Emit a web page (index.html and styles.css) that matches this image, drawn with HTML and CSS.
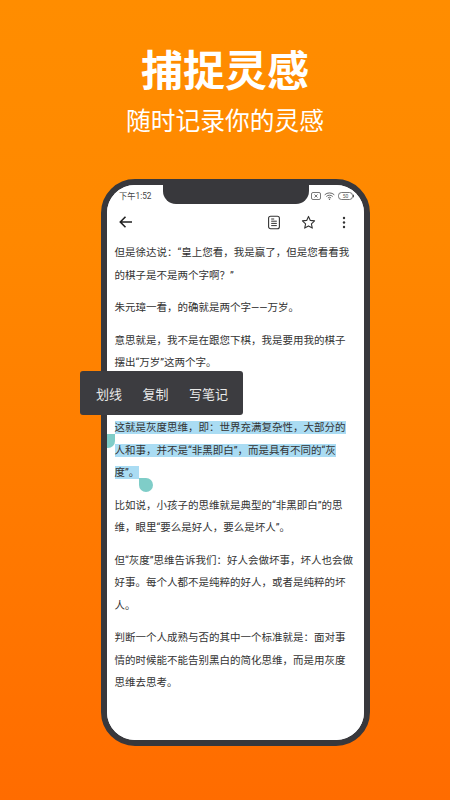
FILE: index.html
```html
<!DOCTYPE html>
<html lang="zh-CN">
<head>
<meta charset="utf-8">
<title>捕捉灵感</title>
<link rel="stylesheet" href="styles.css">
</head>
<body>
<main class="page">
  <h1 class="title">捕捉灵感</h1>
  <p class="subtitle">随时记录你的灵感</p>
  <section class="phone">
    <div class="screen">
      <div class="status">
        <span class="time">下午1:52</span>
        <span class="notch"></span>
        <span class="status-icons">
          <svg width="10" height="8" viewBox="0 0 10 8"><rect x="0.5" y="0.5" width="9" height="7" rx="1.5" fill="none" stroke="#555" stroke-width="0.8"/><path d="M3.5 2.5l3 3M6.5 2.5l-3 3" stroke="#555" stroke-width="0.8"/></svg>
          <svg width="11" height="8" viewBox="0 0 11 8"><path d="M0.7 2.8a7 7 0 0 1 9.6 0M2.3 4.5a4.6 4.6 0 0 1 6.4 0M3.9 6a2.3 2.3 0 0 1 3.2 0" fill="none" stroke="#555" stroke-width="0.9"/><circle cx="5.5" cy="7.2" r="0.7" fill="#555"/></svg>
          <svg width="16" height="8" viewBox="0 0 16 8"><rect x="0.5" y="0.5" width="14" height="7" rx="3" fill="none" stroke="#555" stroke-width="0.8"/><rect x="15" y="2.7" width="1" height="2.6" fill="#555"/><text x="7.5" y="6" font-size="5" text-anchor="middle" fill="#555">50</text></svg>
        </span>
      </div>
      <div class="toolbar">
        <svg class="back" width="16" height="16" viewBox="0 0 16 16"><path d="M14 8H2.5M7.5 2.8L2.3 8l5.2 5.2" fill="none" stroke="#222" stroke-width="1.6"/></svg>
        <span class="tools">
          <svg width="14" height="15" viewBox="0 0 14 15"><rect x="1.6" y="1.2" width="10.8" height="12.6" rx="2" fill="none" stroke="#333" stroke-width="1.1"/><path d="M4.2 4h3M4.2 6.2h5.6M4.2 8.4h5.6M4.2 10.6h5.6" stroke="#333" stroke-width="1"/></svg>
          <svg width="15" height="15" viewBox="0 0 15 15"><path d="M7.5 1.4l1.8 4 4.3.5-3.2 2.9.9 4.3-3.8-2.2-3.8 2.2.9-4.3L1.4 5.9l4.3-.5z" fill="none" stroke="#333" stroke-width="1.1" stroke-linejoin="round"/></svg>
          <svg width="4" height="13" viewBox="0 0 4 13"><circle cx="2" cy="2" r="1.2" fill="#333"/><circle cx="2" cy="6.5" r="1.2" fill="#333"/><circle cx="2" cy="11" r="1.2" fill="#333"/></svg>
        </span>
      </div>
      <article class="reader">
        <p>但是徐达说：“皇上您看，我是赢了，但是您看看我的棋子是不是两个字啊？”</p>
        <p>朱元璋一看，的确就是两个字——万岁。</p>
        <p>意思就是，我不是在跟您下棋，我是要用我的棋子摆出“万岁”这两个字。</p>
        <p class="hidden-line">&nbsp;</p>
        <p><span class="selected">这就是灰度思维，即：世界充满复杂性，大部分的人和事，并不是“非黑即白”，而是具有不同的“灰度”。</span></p>
        <p>比如说，小孩子的思维就是典型的“非黑即白”的思维，眼里“要么是好人，要么是坏人”。</p>
        <p>但“灰度”思维告诉我们：好人会做坏事，坏人也会做好事。每个人都不是纯粹的好人，或者是纯粹的坏人。</p>
        <p>判断一个人成熟与否的其中一个标准就是：面对事情的时候能不能告别黑白的简化思维，而是用灰度思维去思考。</p>
      </article>
      <span class="handle handle-start"></span>
      <span class="handle handle-end"></span>
    </div>
    <div class="menu">
      <span>划线</span><span>复制</span><span>写笔记</span>
    </div>
  </section>
</main>
</body>
</html>
```

FILE: styles.css
```css
* { box-sizing: border-box; }
html, body { margin: 0; height: 100%; }
body {
  font-family: "Roboto", "Noto Sans CJK SC", sans-serif;
  overflow: hidden;
}
.page {
  width: 450px;
  height: 800px;
  background: linear-gradient(180deg, #ff8d00 0%, #ff8800 30%, #ff6c00 100%);
  display: flex;
  flex-direction: column;
  align-items: center;
  padding-top: 44px;
}
.title {
  margin: 0;
  font-size: 42px;
  line-height: 56px;
  font-weight: 700;
  color: #fff;
}
.subtitle {
  margin: 8px 0 0;
  font-size: 24.75px;
  line-height: 28px;
  font-weight: 400;
  color: #fff;
}
.phone {
  position: relative;
  width: 269px;
  height: 567px;
  margin-top: 43px;
  margin-left: 21px;
  border: 6px solid #38383c;
  border-radius: 34px;
  background: #fff;
}
.screen {
  position: relative;
  height: 100%;
  border-radius: 28px;
  overflow: hidden;
  background: #fff;
}
.status {
  height: 20px;
  display: flex;
  justify-content: space-between;
  align-items: center;
  padding: 2px 10px 0 12px;
  position: relative;
}
.time { font-size: 8.25px; line-height: 10px; color: #444; }
.notch {
  position: absolute;
  left: 56px;
  top: -1px;
  width: 146px;
  height: 20px;
  background: #38383c;
  border-radius: 0 0 13px 13px;
}
.status-icons { display: flex; gap: 3px; align-items: center; }
.status-icons svg { display: block; }
.toolbar {
  height: 34px;
  display: flex;
  justify-content: space-between;
  align-items: center;
  padding: 0 18px 0 11px;
}
.toolbar svg { display: block; }
.tools { display: flex; align-items: center; gap: 20px; }
.tools svg:last-child { margin-left: 6px; }
.reader {
  padding: 0 10px 0 7.5px;
  font-size: 10.5px;
  line-height: 22.5px;
  color: #333;
  margin-top: 3px;
}
.reader p { margin: 0 0 10px; }
.hidden-line { visibility: hidden; }
.selected {
  background: linear-gradient(#aadcf3, #aadcf3) center / 100% 13px no-repeat;
  -webkit-box-decoration-break: clone;
  box-decoration-break: clone;
}
.handle {
  position: absolute;
  width: 14px;
  height: 14px;
  background: #7fcdc8;
}
.handle-start {
  left: -6px;
  top: 249px;
  border-radius: 50% 0 50% 50%;
}
.handle-end {
  left: 32px;
  top: 293px;
  border-radius: 0 50% 50% 50%;
}
.menu {
  position: absolute;
  left: -27px;
  top: 186px;
  width: 163px;
  height: 44px;
  display: flex;
  align-items: center;
  gap: 20.5px;
  padding-left: 16px;
  background: #3c3c40;
  border-radius: 3px;
  font-size: 13px;
  color: #e8e8e8;
}
```
